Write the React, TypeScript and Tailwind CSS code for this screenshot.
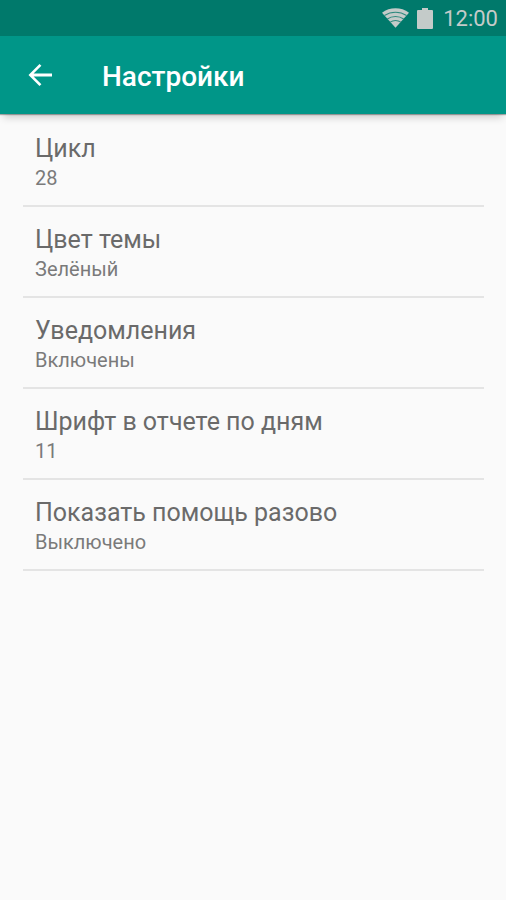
interface Setting {
  title: string;
  value: string;
}

const SETTINGS: Setting[] = [
  { title: "Цикл", value: "28" },
  { title: "Цвет темы", value: "Зелёный" },
  { title: "Уведомления", value: "Включены" },
  { title: "Шрифт в отчете по дням", value: "11" },
  { title: "Показать помощь разово", value: "Выключено" },
];

function WifiIcon() {
  return (
    <svg viewBox="0 0 28 20" className="mr-2 h-5 w-[27px]" aria-hidden="true">
      <path d="M14 20 0 4.500C4 1.500 9 0 14 0s10 1.500 14 4.500z" fill="currentColor" />
      {/* dark gaps between the signal arcs */}
      <g fill="none" stroke="#2f8a7f" strokeWidth="1.2">
        <path d="M2.500 7.500C6 5.200 10 4 14 4s8 1.200 11.500 3.500" />
        <path d="M5.500 11c2.400-1.700 5.300-2.600 8.500-2.600s6.100.900 8.500 2.600" />
        <path d="M8.500 14.300c1.600-1.100 3.400-1.700 5.500-1.700s3.900.600 5.500 1.700" />
      </g>
    </svg>
  );
}

function StatusBar() {
  return (
    <div className="flex h-9 items-center justify-end bg-[#00796b] pr-2 text-[#c4cbc9]">
      <WifiIcon />
      <svg viewBox="0 0 16 21" className="mr-2.5 h-[21px] w-4" aria-hidden="true">
        <path d="M5 0h6v2h4q1 0 1 1v17q0 1-1 1H1q-1 0-1-1V3q0-1 1-1h4z" fill="currentColor" />
      </svg>
      <span className="pt-0.5 text-[22px] leading-8">12:00</span>
    </div>
  );
}

function SettingRow({ title, value }: Setting) {
  return (
    <li className="border-b-2 border-[#e4e4e4]">
      <button type="button" className="block w-full px-3 pt-4 pb-[15px] text-left">
        <span className="block text-[25px] leading-[34px] text-[#6a6a6a]">{title}</span>
        <span className="block text-[20px] leading-6 text-[#7a7a7a]">{value}</span>
      </button>
    </li>
  );
}

export default function App() {
  return (
    <div className="min-h-screen bg-[#fafafa] font-[Roboto,sans-serif]">
      <StatusBar />
      <header className="flex h-[78px] items-center bg-[#009688] px-7 text-white shadow-[0_1px_1px_rgba(0,0,0,0.3),0_6px_8px_-3px_rgba(0,0,0,0.2)]">
        <button type="button" aria-label="Назад">
          <svg viewBox="0 0 24 24" className="size-6" aria-hidden="true">
            <path d="M24 10.500H5.600l7.800-7.800L11.500.900.500 12l11 11.100 1.900-1.900-7.800-7.800H24z" fill="currentColor" />
          </svg>
        </button>
        <h1 className="ml-[50px] pt-1 text-[28px] font-medium">Настройки</h1>
      </header>
      <ul className="mr-[22px] ml-[23px] pt-0.5">
        {SETTINGS.map((s) => (
          <SettingRow key={s.title} {...s} />
        ))}
      </ul>
    </div>
  );
}
